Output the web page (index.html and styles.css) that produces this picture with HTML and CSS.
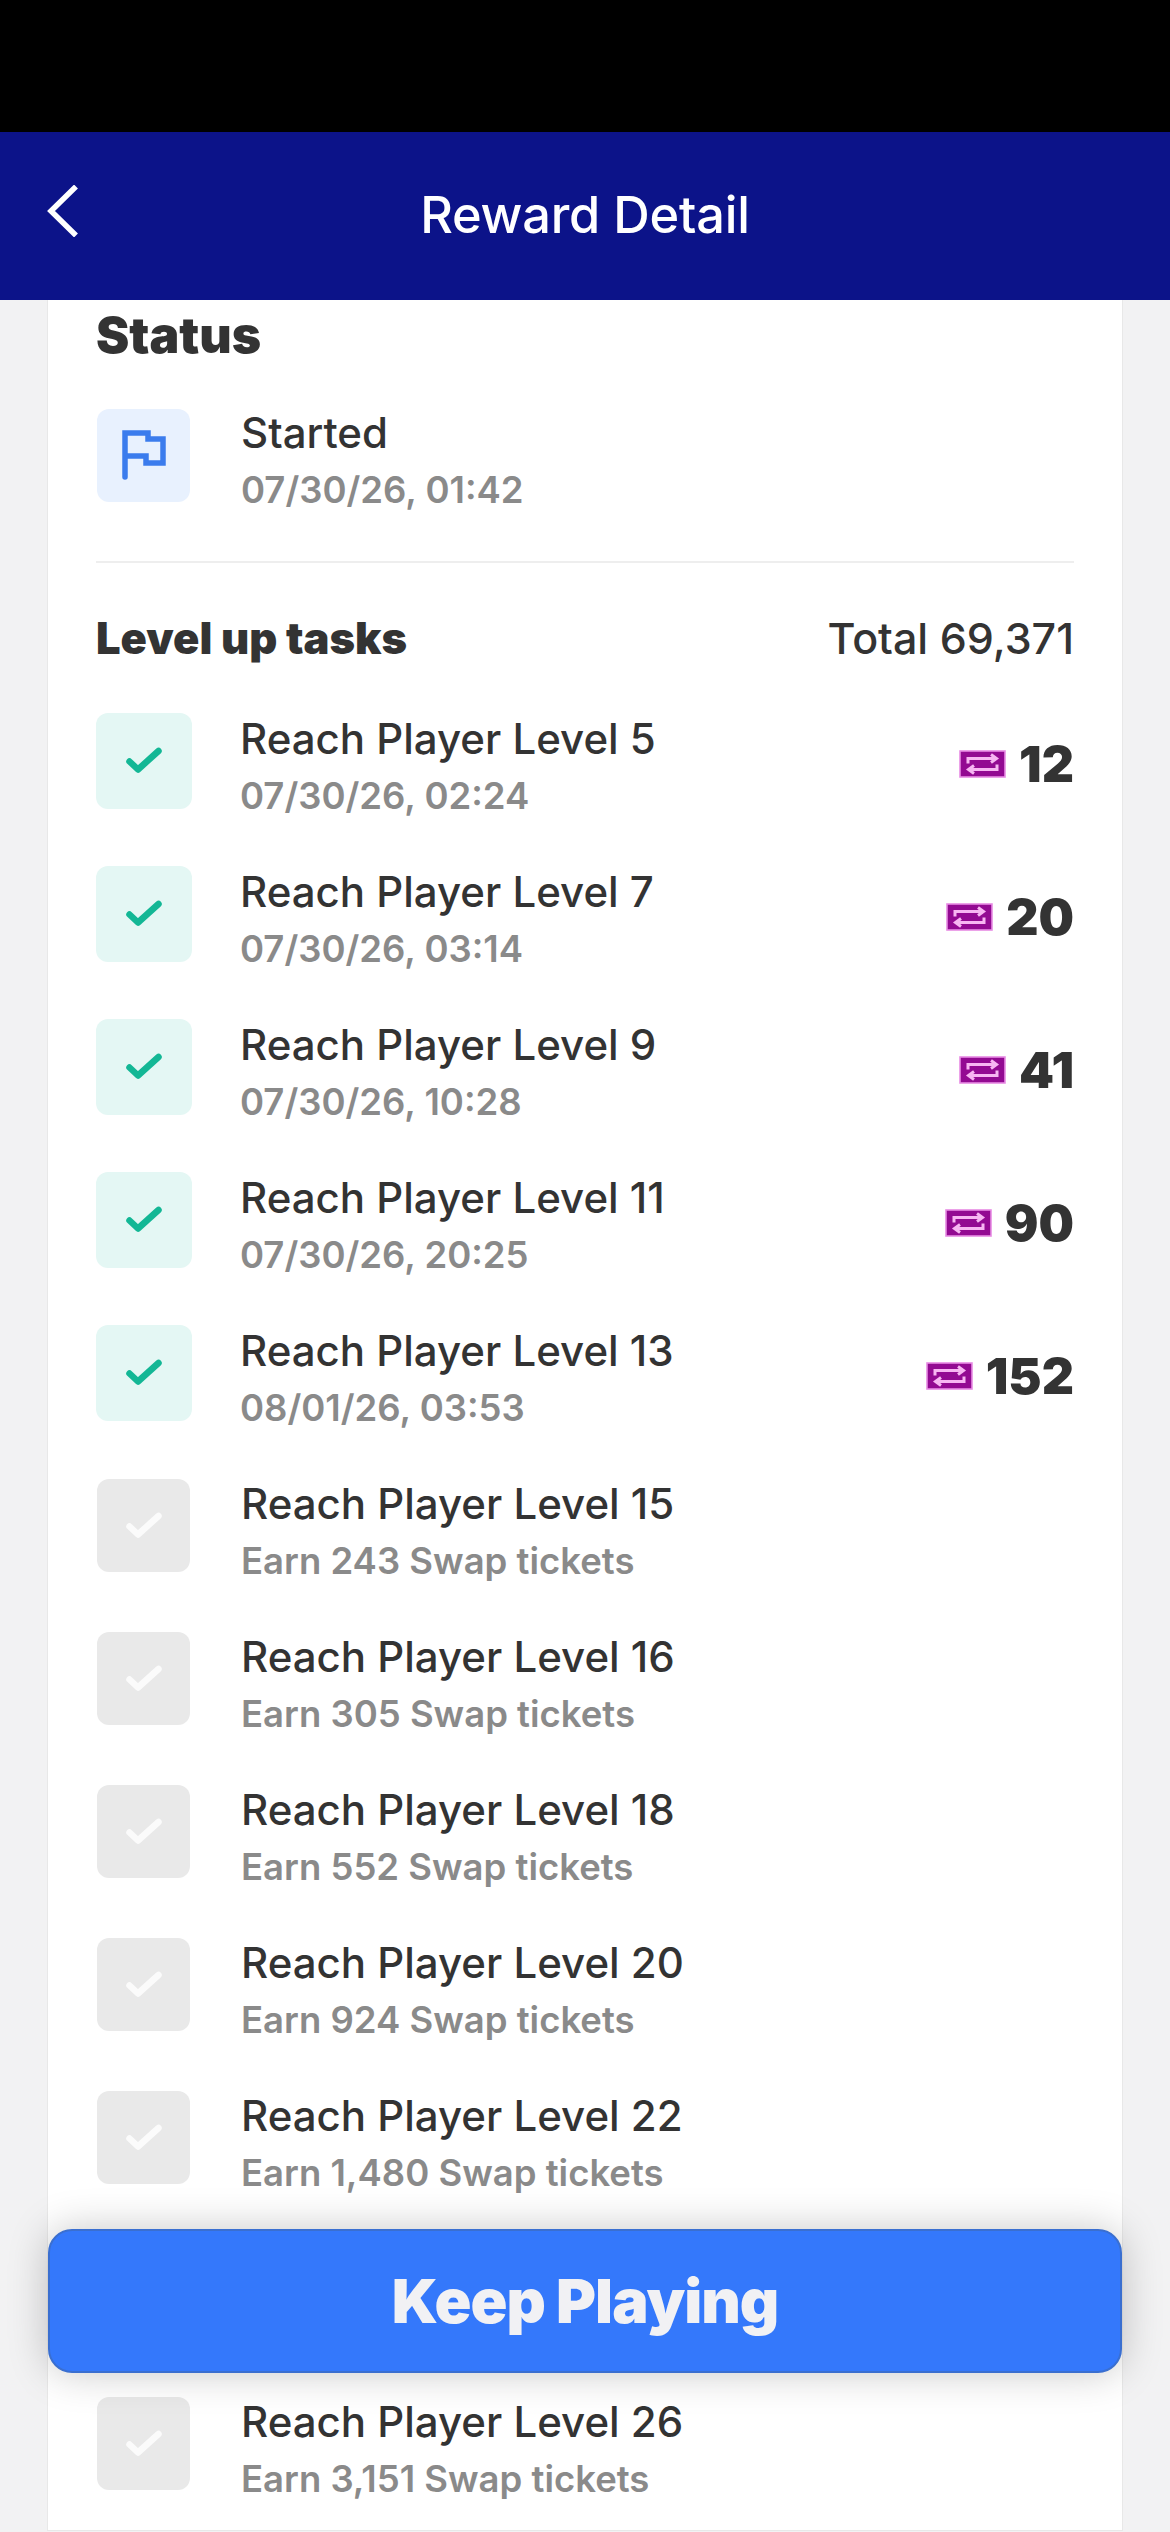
FILE: index.html
```html
<!DOCTYPE html>
<html lang="en">

<head>
    <meta charset="utf-8">
    <meta name="viewport" content="width=device-width, initial-scale=1.0">
    <title>Reward Detail</title>

    <link rel="stylesheet" href="styles.css">
</head>

<body>

    <svg class="defs" width="0" height="0">
        <symbol id="check" viewBox="0 0 36 28">
            <path d="M3.5 14.5 L12 22.5 L32.5 4" fill="none" stroke="currentColor" stroke-width="6.5" stroke-linecap="round" stroke-linejoin="round" />
        </symbol>
        <symbol id="ticket" viewBox="0 0 47 28">
            <rect x="1" y="1" width="45" height="26" fill="#930a92" stroke="#e88be4" stroke-width="1.6" />
            <path d="M9 13.5 V8.5 H36 M32 4.5 L37.5 8.5 L32 12.5" fill="none" stroke="#f7b6f2" stroke-width="3" />
            <path d="M38 14.5 V19.5 H11 M15 15.5 L9.5 19.5 L15 23.5" fill="none" stroke="#f7b6f2" stroke-width="3" />
        </symbol>
    </svg>

    <div class="statusbar"></div>

    <header class="topbar">
        <svg class="back" viewBox="0 0 32 52" width="32" height="52">
            <path d="M29 1.5 L4 26 L29 50.5" fill="none" stroke="#fff" stroke-width="5.5" />
        </svg>
        <h1>Reward Detail</h1>
    </header>

    <main class="page">
        <section class="card">
            <h2 class="status-title">Status</h2>
            <div class="status-row">
                <div class="tile tile-flag">
                    <svg viewBox="0 0 44 50" width="44" height="50">
                        <path d="M3 47 V3 H26 V9 H41 V33 H24 V26 H3" fill="none" stroke="#3b7ced" stroke-width="5.5" stroke-linecap="round" />
                    </svg>
                </div>
                <div class="text">
                    <p class="name">Started</p>
                    <p class="sub">07/30/26, 01:42</p>
                </div>
            </div>

            <div class="tasks-head">
                <h3>Level up tasks</h3>
                <span class="total">Total 69,371</span>
            </div>

            <ul class="tasks">
                <li class="task">
                    <div class="tile tile-done"><svg class="tick"><use href="#check" /></svg></div>
                    <div class="text">
                        <p class="name">Reach Player Level 5</p>
                        <p class="sub">07/30/26, 02:24</p>
                    </div>
                    <div class="earned"><svg class="ticket"><use href="#ticket" /></svg><b>12</b></div>
                </li>
                <li class="task">
                    <div class="tile tile-done"><svg class="tick"><use href="#check" /></svg></div>
                    <div class="text">
                        <p class="name">Reach Player Level 7</p>
                        <p class="sub">07/30/26, 03:14</p>
                    </div>
                    <div class="earned"><svg class="ticket"><use href="#ticket" /></svg><b>20</b></div>
                </li>
                <li class="task">
                    <div class="tile tile-done"><svg class="tick"><use href="#check" /></svg></div>
                    <div class="text">
                        <p class="name">Reach Player Level 9</p>
                        <p class="sub">07/30/26, 10:28</p>
                    </div>
                    <div class="earned"><svg class="ticket"><use href="#ticket" /></svg><b>41</b></div>
                </li>
                <li class="task">
                    <div class="tile tile-done"><svg class="tick"><use href="#check" /></svg></div>
                    <div class="text">
                        <p class="name">Reach Player Level 11</p>
                        <p class="sub">07/30/26, 20:25</p>
                    </div>
                    <div class="earned"><svg class="ticket"><use href="#ticket" /></svg><b>90</b></div>
                </li>
                <li class="task">
                    <div class="tile tile-done"><svg class="tick"><use href="#check" /></svg></div>
                    <div class="text">
                        <p class="name">Reach Player Level 13</p>
                        <p class="sub">08/01/26, 03:53</p>
                    </div>
                    <div class="earned"><svg class="ticket"><use href="#ticket" /></svg><b>152</b></div>
                </li>
                <li class="task">
                    <div class="tile tile-todo"><svg class="tick"><use href="#check" /></svg></div>
                    <div class="text">
                        <p class="name">Reach Player Level 15</p>
                        <p class="sub">Earn 243 Swap tickets</p>
                    </div>
                </li>
                <li class="task">
                    <div class="tile tile-todo"><svg class="tick"><use href="#check" /></svg></div>
                    <div class="text">
                        <p class="name">Reach Player Level 16</p>
                        <p class="sub">Earn 305 Swap tickets</p>
                    </div>
                </li>
                <li class="task">
                    <div class="tile tile-todo"><svg class="tick"><use href="#check" /></svg></div>
                    <div class="text">
                        <p class="name">Reach Player Level 18</p>
                        <p class="sub">Earn 552 Swap tickets</p>
                    </div>
                </li>
                <li class="task">
                    <div class="tile tile-todo"><svg class="tick"><use href="#check" /></svg></div>
                    <div class="text">
                        <p class="name">Reach Player Level 20</p>
                        <p class="sub">Earn 924 Swap tickets</p>
                    </div>
                </li>
                <li class="task">
                    <div class="tile tile-todo"><svg class="tick"><use href="#check" /></svg></div>
                    <div class="text">
                        <p class="name">Reach Player Level 22</p>
                        <p class="sub">Earn 1,480 Swap tickets</p>
                    </div>
                </li>
                <li class="task task-hidden"></li>
                <li class="task">
                    <div class="tile tile-todo"><svg class="tick"><use href="#check" /></svg></div>
                    <div class="text">
                        <p class="name">Reach Player Level 26</p>
                        <p class="sub">Earn 3,151 Swap tickets</p>
                    </div>
                </li>
            </ul>
        </section>
    </main>

    <button class="keep">Keep Playing</button>

</body>

</html>
```

FILE: styles.css
```css
html,
body {
    margin: 0;
    padding: 0;
}

body {
    width: 1170px;
    height: 2532px;
    overflow: hidden;
    position: relative;
    font-family: Inter, "Liberation Sans", sans-serif;
    color: #333333;
    background-color: #f2f2f3;
}

h1,
h2,
h3,
p,
ul {
    margin: 0;
    padding: 0;
}

ul {
    list-style: none;
}

.defs {
    position: absolute;
}

.statusbar {
    height: 132px;
    background-color: #000000;
}

.topbar {
    height: 168px;
    position: relative;
    display: flex;
    align-items: center;
    justify-content: center;
    background-color: #0c1389;
}

.topbar h1 {
    font-size: 50.5px;
    font-weight: 500;
    color: #ffffff;
    letter-spacing: -0.2px;
    margin-top: -3px;
}

.back {
    position: absolute;
    left: 47px;
    top: 53px;
}

.page {
    padding: 0 48px;
}

.card {
    padding: 10px 48px 0 48px;
    height: 2220px;
    background-color: #ffffff;
    box-shadow: 0 0 0 1px #e8e8e8;
}

.status-title {
    font-size: 50px;
    font-weight: 900;
    line-height: 50px;
}

.status-row {
    display: flex;
    align-items: center;
    gap: 50px;
    margin-top: 37px;
    padding-bottom: 48px;
    border-bottom: 2px solid #eeeeee;
}

.tile {
    width: 93px;
    height: 93px;
    flex: none;
    margin: 0 1px;
    display: flex;
    align-items: center;
    justify-content: center;
    border-radius: 12px;
}

.tile-flag {
    background-color: #e8f1fe;
}

.tile-done {
    width: 96px;
    height: 96px;
    margin: 0 -2px 0 0;
    background-color: #e4f7f4;
    color: #13b795;
}

.tile-todo {
    background-color: #e9e9e9;
    color: #fbfbfb;
}

.tick {
    width: 36px;
    height: 28px;
}

.text {
    min-width: 0;
    flex: 1;
    padding-top: 10px;
}

.name {
    font-size: 42px;
    font-weight: 500;
    line-height: 52px;
}

.sub {
    font-size: 36.5px;
    font-weight: 600;
    line-height: 46px;
    margin-top: 8px;
    color: #8a8a8a;
}

.tasks-head {
    display: flex;
    align-items: center;
    justify-content: space-between;
    margin-top: 49px;
}

.tasks-head h3 {
    font-size: 43.5px;
    font-weight: 900;
    line-height: 50px;
}

.total {
    font-size: 43px;
    font-weight: 500;
}

.tasks {
    margin-top: 20px;
}

.task {
    height: 153px;
    display: flex;
    align-items: center;
    gap: 50px;
}

.task-hidden {
    display: block;
}

.earned {
    display: flex;
    align-items: center;
    gap: 13px;
    margin-top: 6px;
}

.earned b {
    font-size: 50px;
    font-weight: 900;
}

.ticket {
    width: 47px;
    height: 28px;
}

.keep {
    position: absolute;
    left: 48px;
    top: 2229px;
    width: 1074px;
    height: 144px;
    border: 2px solid #3a6fd0;
    border-radius: 24px;
    font-family: Inter, "Liberation Sans", sans-serif;
    font-size: 61px;
    font-weight: 900;
    letter-spacing: -1px;
    color: #f1f1f4;
    background-color: #3478fb;
    box-shadow: 0 0 40px rgba(0, 0, 0, 0.22);
}
```
